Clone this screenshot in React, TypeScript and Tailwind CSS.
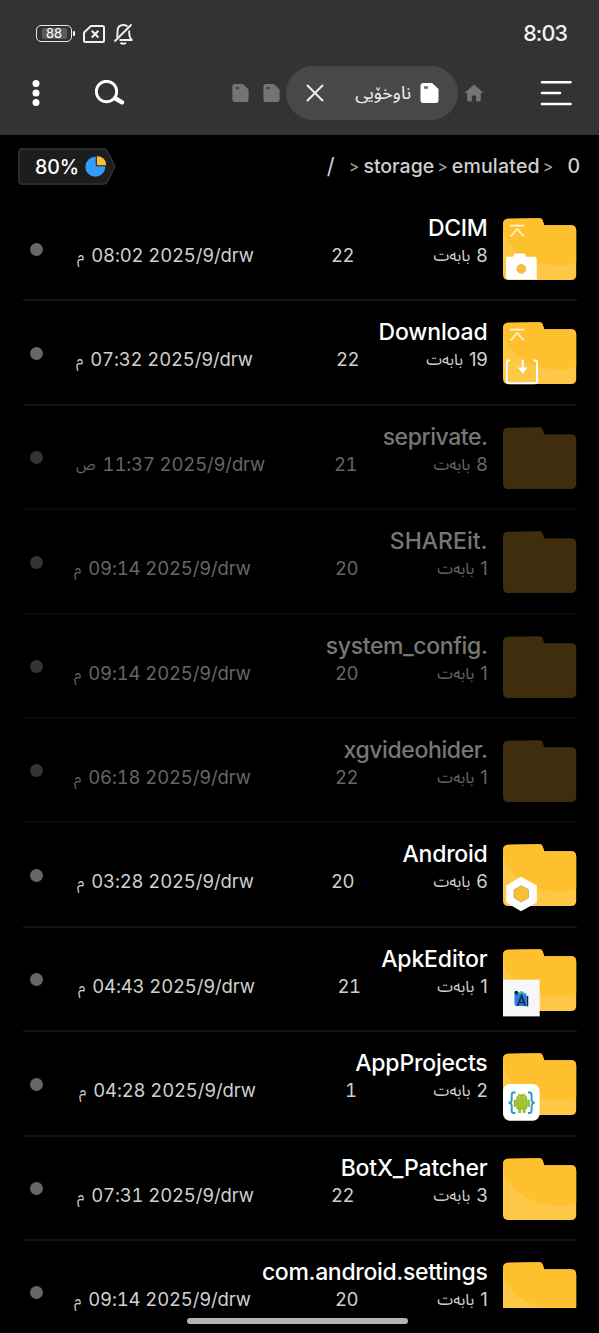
import { ReactNode } from "react";
import clsx from "clsx";

interface Entry {
  name: string;
  nameClass: string;
  count: number;
  day: number;
  dayClass: string;
  time: string;
  period: string;
  dateClass: string;
  hidden?: boolean;
  pinned?: boolean;
  cut?: boolean;
  badge?: ReactNode;
}

const CameraBadge = () => (
  <g>
    <path d="M3 41Q3 38.800 5 38.800H10L11.500 35.500H21.500L23 38.800H31.500Q33.700 38.800 33.700 41V61.500H6Q3 61.500 3 58.500z" fill="#fff" />
    <circle cx="18.300" cy="50.900" r="4.400" fill="#fbbd33" stroke="#d9b566" strokeWidth="0.800" />
  </g>
);

const DownloadBadge = () => (
  <g fill="none" stroke="#fff" strokeWidth="2">
    <path d="M7 38.500H5.500Q3.800 38.500 3.800 40.500V58.500Q3.800 61.200 6 61.200H31.500Q34 61.200 34 58.500V40.500Q34 38.500 32 38.500H30.500" />
    <path d="M19.700 37.700v9" />
    <path d="M15 45.500h9.400l-4.700 6.300z" fill="#fff" stroke="none" />
  </g>
);

const HexBadge = () => (
  <g>
    <path d="M18 32.700 33.800 41.500V58.500L18 67.200 3.200 58.500V41.500z" fill="#fff" />
    <path d="M18.200 41.800 25.500 45.800V53.800L18.200 58 11 53.800V45.800z" fill="#fbbd33" stroke="#c9ab68" strokeWidth="0.900" />
  </g>
);

const ApkEditorBadge = () => (
  <g>
    <rect x="0" y="30.700" width="36.700" height="36.700" fill="#f5f7f8" />
    <path d="M14 45Q19 39.500 22.500 46L21 48H14z" fill="#35c596" />
    <rect x="11.500" y="44" width="12" height="13" rx="2" fill="#2f78e6" />
    <path d="M14.500 44.500Q19.500 39.500 22.500 46z" fill="#35c596" />
    <circle cx="13.300" cy="43.700" r="1.900" fill="#0c2440" />
    <path d="M14.500 57 18.700 46.500 22.300 57M16.500 53.500h4.500M24.400 47v10.500" fill="none" stroke="#0e2b58" strokeWidth="1.700" />
  </g>
);

const AppProjectsBadge = () => (
  <g>
    <rect x="0" y="31" width="36.700" height="36.700" rx="7" fill="#fff" />
    <path
      d="M12.500 39.500H10.500Q8.700 39.500 8.700 42V46.500Q8.700 49.700 5.500 49.700Q8.700 49.700 8.700 53V57.500Q8.700 60 10.500 60H12.500M25 39.500H26.700Q28.600 39.500 28.600 42V46.500Q28.600 49.700 31.800 49.700Q28.600 49.700 28.600 53V57.500Q28.600 60 26.700 60H25"
      fill="none"
      stroke="#2b9bc4"
      strokeWidth="1.900"
    />
    <g fill="#a0c727" stroke="#799c28" strokeWidth="0.500">
      <path d="M13.500 45.500Q14 41.500 18.700 41.500T24 45.500z" />
      <path d="M13.500 46.300h10.500v8.200q0 1.500-1.500 1.500H15q-1.500 0-1.500-1.500z" />
      <path d="M15.500 55.500h2.200v4h-2.200zM20 55.500h2.200v4H20zM11 47h1.800v6.500H11zM24.700 47h1.800v6.500h-1.800z" />
      <path d="M15.500 40l1 2M22 40l-1 2" />
    </g>
    <circle cx="16.700" cy="44" r="0.500" fill="#fff" />
    <circle cx="20.800" cy="44" r="0.500" fill="#fff" />
  </g>
);

const entries: Entry[] = [
  { name: "DCIM", nameClass: "tracking-[-0.3px]", count: 8, day: 22, dayClass: "w-[294px]", time: "08:02", period: "م", dateClass: "pl-[17px]", pinned: true, badge: <CameraBadge /> },
  { name: "Download", nameClass: "tracking-[-0.15px]", count: 19, day: 22, dayClass: "w-[299px]", time: "07:32", period: "م", dateClass: "pl-[16px]", pinned: true, badge: <DownloadBadge /> },
  { name: "seprivate.", nameClass: "tracking-[-0.45px]", count: 8, day: 21, dayClass: "w-[297px]", time: "11:37", period: "ص", dateClass: "pl-[16px]", hidden: true },
  { name: "SHAREit.", nameClass: "tracking-normal", count: 1, day: 20, dayClass: "w-[298px]", time: "09:14", period: "م", dateClass: "pl-[14px]", hidden: true },
  { name: "system_config.", nameClass: "tracking-[-0.38px]", count: 1, day: 20, dayClass: "w-[298px]", time: "09:14", period: "م", dateClass: "pl-[14px]", hidden: true },
  { name: "xgvideohider.", nameClass: "tracking-[-0.38px]", count: 1, day: 22, dayClass: "w-[298px]", time: "06:18", period: "م", dateClass: "pl-[14px]", hidden: true },
  { name: "Android", nameClass: "tracking-[-0.25px]", count: 6, day: 20, dayClass: "w-[294px]", time: "03:28", period: "م", dateClass: "pl-[17px]", badge: <HexBadge /> },
  { name: "ApkEditor", nameClass: "tracking-[-0.15px]", count: 1, day: 21, dayClass: "w-[300.5px]", time: "04:43", period: "م", dateClass: "pl-[18px]", badge: <ApkEditorBadge /> },
  { name: "AppProjects", nameClass: "tracking-[-0.2px]", count: 2, day: 1, dayClass: "w-[296.5px]", time: "04:28", period: "م", dateClass: "pl-[19px]", badge: <AppProjectsBadge /> },
  { name: "BotX_Patcher", nameClass: "tracking-[-0.2px]", count: 3, day: 22, dayClass: "w-[294px]", time: "07:31", period: "م", dateClass: "pl-[17px]" },
  { name: "com.android.settings", nameClass: "tracking-[-0.33px]", count: 1, day: 20, dayClass: "w-[298px]", time: "09:14", period: "م", dateClass: "pl-[14px]", cut: true },
];

const FOLDER = "M5 .8 36.500 .3Q39 .3 39.700 2.500L41.200 7.300H68Q73.200 7.300 73.200 12.500V57Q73.200 62 68 62H5.500Q0 62 0 56.500V6.500Q0 1 5 .8z";

function Folder({ hidden, pinned, cut, badge }: Pick<Entry, "hidden" | "pinned" | "cut" | "badge">) {
  return (
    <div className={clsx("mt-[22px] ml-[15px] w-[74px] shrink-0 overflow-hidden", cut ? "h-[46px]" : "h-[69px]")}>
      <svg viewBox="0 0 74 69" className="h-[69px] w-[74px]">
        <path d={FOLDER} fill={hidden ? "#3f2e0e" : "#fec846"} />
        {!hidden && (
          <path d="M5 .8 36.500 .3Q39 .3 39.700 2.500L41.200 7.300H68Q73.200 7.300 73.200 12.500V44Q62 49 50 47.500Q12 43 0 14V6.500Q0 1 5 .8z" fill="#fec02d" />
        )}
        {pinned && <path d="M7 7.700H21.500M7.500 18.500 14.200 11 21 18.500" fill="none" stroke="#fff3d6" strokeWidth="1.800" />}
        {badge}
      </svg>
    </div>
  );
}

function Row({ entry }: { entry: Entry }) {
  const { hidden } = entry;
  return (
    <li className="flex h-[104.4px] shrink-0 pr-[23px] pl-[23px]">
      <div className={clsx("flex h-[105.4px] flex-1 border-b-2", hidden ? "border-[#090909]" : "border-[#121212]")}>
        <span className={clsx("mt-[46.5px] ml-[7px] size-[13px] shrink-0 rounded-full", hidden ? "bg-[#343434]" : "bg-[#676767]")} />
        <div className="ml-[17px] w-[427.5px] shrink-0 pt-[17px]">
          <p className={clsx("h-[30px] text-right text-[23px] leading-[31px] font-medium whitespace-nowrap", entry.nameClass, hidden ? "text-[#777]" : "text-white")}>
            {entry.name}
          </p>
          <div className={clsx("flex h-[24px] justify-between text-[18.5px] leading-[25px] whitespace-nowrap", hidden ? "text-[#666]" : "text-[#d0d0d0]")}>
            <div className={clsx("flex justify-between tabular-nums", entry.dayClass)}>
              <span className={clsx("flex gap-[7px]", entry.dateClass)}>
                <span className="text-[15px]">{entry.period}</span>
                <span className="tracking-[-0.15px]">{entry.time} 2025/9/drw</span>
              </span>
              <span className="tracking-[-0.5px]">{entry.day}</span>
            </div>
            <span dir="rtl" className="flex gap-[6px]">
              <span className="tracking-[-0.3px]">{entry.count}</span>
              <span className="text-[16px] leading-[24px]">بابەت</span>
            </span>
          </div>
        </div>
        <Folder hidden={hidden} pinned={entry.pinned} cut={entry.cut} badge={entry.badge} />
      </div>
    </li>
  );
}

function StatusBar() {
  return (
    <div className="flex h-[66px] items-center pr-[32px] pl-[36px]">
      <div className="relative flex h-[17px] w-[36px] items-center justify-center rounded-[5px] border-[1.5px] border-[#e8e8e8]">
        <div className="flex h-[11px] w-[25px] items-center justify-center rounded-[2px] bg-[#5c5c5c] text-[13px] leading-none text-white">88</div>
        <span className="absolute top-[5px] -right-[4px] h-[5px] w-[2px] rounded-full bg-white" />
      </div>
      <svg viewBox="0 0 24 20" className="mt-[1px] ml-[10px] h-[20px] w-[24px]" fill="none" stroke="#f0f0f0">
        <path d="M9 2H20.500Q22 2 22 3.500V16.500Q22 18 20.500 18H3.500Q2 18 2 16.500V8.500z" strokeWidth="2" strokeLinejoin="round" />
        <path d="M9.800 6.800 16.400 13.400M16.400 6.800 9.800 13.400" strokeWidth="2.100" />
      </svg>
      <svg viewBox="0 0 22 22" className="mt-[1px] ml-[7px] h-[22px] w-[22px]" fill="none" stroke="#f0f0f0" strokeWidth="1.900">
        <path d="M4 14.500Q4.500 12.500 4.500 10V8.500Q4.500 2 10.500 2Q13 2 14.500 3.500M16.200 7.500V10Q16.200 14.500 18.800 17H6.500" strokeLinejoin="round" />
        <path d="M18.500 1.500 1.500 18.500" />
        <path d="M7.500 19.700Q10.200 21.800 13 19.700" />
      </svg>
      <time className="mt-[2px] ml-auto text-[21.5px] leading-none font-medium tracking-[-0.9px] text-[#f2f2f2]">8:03</time>
    </div>
  );
}

function CardIcon({ active }: { active?: boolean }) {
  return (
    <svg viewBox="0 0 18 20" className={active ? "h-[20px] w-[19px]" : "h-[18px] w-[17px]"}>
      <path d="M2.500 0H11.500L18 6V17Q18 20 15.500 20H2.500Q0 20 0 17V3Q0 0 2.500 0z" fill={active ? "#fff" : "#747474"} />
      <path d="M3.500 3.200h4v2.600h-4z" fill={active ? "#777" : "#464646"} />
    </svg>
  );
}

function Toolbar() {
  return (
    <div className="flex h-[54px] items-center pr-[27px] pl-[32px]">
      <svg viewBox="0 0 8 28" className="h-[28px] w-[8px]" fill="#fff">
        <circle cx="4" cy="4.500" r="3.500" />
        <circle cx="4" cy="14" r="3.500" />
        <circle cx="4" cy="23.500" r="3.500" />
      </svg>
      <svg viewBox="0 0 30 26" className="ml-[55px] h-[26px] w-[30px]" fill="none" stroke="#fff">
        <circle cx="11.500" cy="11.500" r="10.200" strokeWidth="2.900" />
        <path d="M20.500 18.500 27 22.300" strokeWidth="4.400" strokeLinecap="round" />
      </svg>
      <div className="ml-[107px] flex gap-[13.500px]">
        <CardIcon />
        <CardIcon />
      </div>
      <div className="ml-[6.500px] flex h-[54px] w-[172px] shrink-0 items-center rounded-full bg-[#484848]">
        <svg viewBox="0 0 18 18" className="ml-[20px] size-[18px]" stroke="#eee" strokeWidth="2">
          <path d="M1 1 17 17M17 1 1 17" />
        </svg>
        <span dir="rtl" className="ml-[29px] w-[58px] text-[18px] leading-[26px] whitespace-nowrap text-[#f0f0f0]">ناوخۆیی</span>
        <span className="ml-[9px]">
          <CardIcon active />
        </span>
      </div>
      <svg viewBox="0 0 20 18" className="ml-[6px] h-[18px] w-[20px]" fill="#747474">
        <path d="M10 .5 19.500 9H16.800V16Q16.800 17.500 15.300 17.500H12.200V11.500H7.800V17.500H4.700Q3.200 17.500 3.200 16V9H.5z" />
      </svg>
      <svg viewBox="0 0 32 26" className="ml-auto h-[26px] w-[32px]" stroke="#fff" strokeWidth="2.600" strokeLinecap="round">
        <path d="M2 2.200H30.500M2 13H20M2 24H30.500" />
      </svg>
    </div>
  );
}

function PathBar() {
  return (
    <div className="flex h-[61px] shrink-0 items-center pt-[1px] pr-[19px] pl-[18px]">
      <div className="relative h-[37px] w-[98px]">
        <svg viewBox="0 0 98 37" className="absolute inset-0 h-[37px] w-[98px]">
          <path d="M4 .8H85.500Q88 .8 89 2.500L97 18.500 89 34.500Q88 36.200 85.500 36.200H4Q.8 36.200 .8 33V4Q.8 .8 4 .8z" fill="#1d1d1d" stroke="#383838" strokeWidth="1.200" />
          <circle cx="77.300" cy="18.800" r="10" fill="#349bfa" />
          <path d="M78.300 17.800V7.500Q88.500 8 88.800 17.800z" fill="#fcbf38" stroke="#1d1d1d" strokeWidth="1" />
        </svg>
        <span className="relative block pl-[17px] text-[19.5px] leading-[38px] font-medium text-white">80%</span>
      </div>
      <div className="ml-auto flex items-center text-[19.5px] leading-[30px] font-medium text-[#cfcfcf]">
        <span className="text-[22px] font-normal">/</span>
        <span className="ml-[14px] text-[16px] font-normal text-[#aaa]">&gt;</span>
        <span className="ml-[4px]">storage</span>
        <span className="ml-[3px] text-[16px] font-normal text-[#aaa]">&gt;</span>
        <span className="ml-[4px] tracking-[0.2px]">emulated</span>
        <span className="ml-[3px] text-[16px] font-normal text-[#aaa]">&gt;</span>
        <span className="ml-[14px]">0</span>
      </div>
    </div>
  );
}

export default function App() {
  return (
    <div dir="ltr" className="flex h-[1333px] w-[599px] flex-col overflow-hidden bg-black font-['Inter','Noto_Sans_Arabic','DejaVu_Sans',sans-serif]">
      <header className="h-[135px] shrink-0 bg-[#333]">
        <StatusBar />
        <Toolbar />
      </header>
      <PathBar />
      <ul className="flex h-[1117px] shrink-0 flex-col overflow-hidden">
        {entries.map((entry) => (
          <Row key={entry.name} entry={entry} />
        ))}
      </ul>
      <div className="mt-[5px] ml-[187px] h-[6px] w-[221px] shrink-0 rounded-full bg-[#b3b3b3]" />
    </div>
  );
}
